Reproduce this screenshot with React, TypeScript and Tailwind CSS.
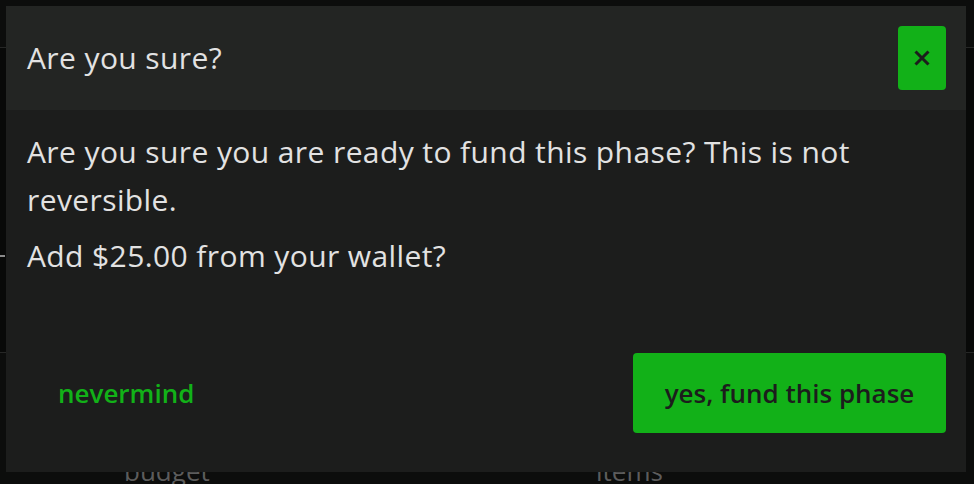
const font = { fontFamily: "'Open Sans', 'Noto Sans', sans-serif" };

function CloseIcon() {
  return (
    <svg width="16" height="16" viewBox="0 0 16 16" fill="none">
      <path d="M1.5 1.5L14.5 14.5M14.5 1.5L1.5 14.5" stroke="#1c1d1c" strokeWidth="3" />
    </svg>
  );
}

function FundPhaseDialog() {
  return (
    <div className="absolute left-[6px] top-[6px] w-[960px] h-[466px] flex flex-col bg-[#1c1d1c]">
      <div className="h-[104px] flex items-center justify-between pl-[21px] pr-5 bg-[#232523]">
        <h2 className="text-[30px] leading-[48px] tracking-[0.4px] text-[#e2e2e2]">Are you sure?</h2>
        <button className="w-12 h-16 flex items-center justify-center rounded-[4px] bg-[#12b118]">
          <CloseIcon />
        </button>
      </div>
      <div className="pl-[21px] pr-5 pt-[18px] text-[30px] leading-[48px] tracking-[0.4px] text-[#e2e2e2]">
        <p>Are you sure you are ready to fund this phase? This is not reversible.</p>
        <p className="mt-2">Add $25.00 from your wallet?</p>
      </div>
      <div className="mt-auto mb-[39px] px-5 flex items-center justify-between">
        <button className="h-20 px-8 flex items-center text-[26px] font-semibold text-[#12b118]">
          nevermind
        </button>
        <button className="w-[313px] h-20 flex items-center justify-center rounded-[4px] bg-[#12b118] text-[26px] font-semibold text-[#1c1d1c]">
          yes, fund this phase
        </button>
      </div>
    </div>
  );
}

export default function App() {
  return (
    <div className="relative w-[974px] h-[484px] overflow-hidden bg-[#0c0d0c]" style={font}>
      <div className="h-[48px] border-b border-[#262726]" />
      <div className="h-[305px] pt-[207px] bg-[#080908] border-b border-[#262726]">
        <div className="w-[5px] h-[2px] bg-[#8a8a8a]" />
      </div>
      <div className="h-[131px] flex items-end pl-[124px] text-[26px] leading-[26px] text-[#5c5c5c]">
        <span className="w-[472px]">budget</span>
        <span>items</span>
      </div>
      <FundPhaseDialog />
    </div>
  );
}
